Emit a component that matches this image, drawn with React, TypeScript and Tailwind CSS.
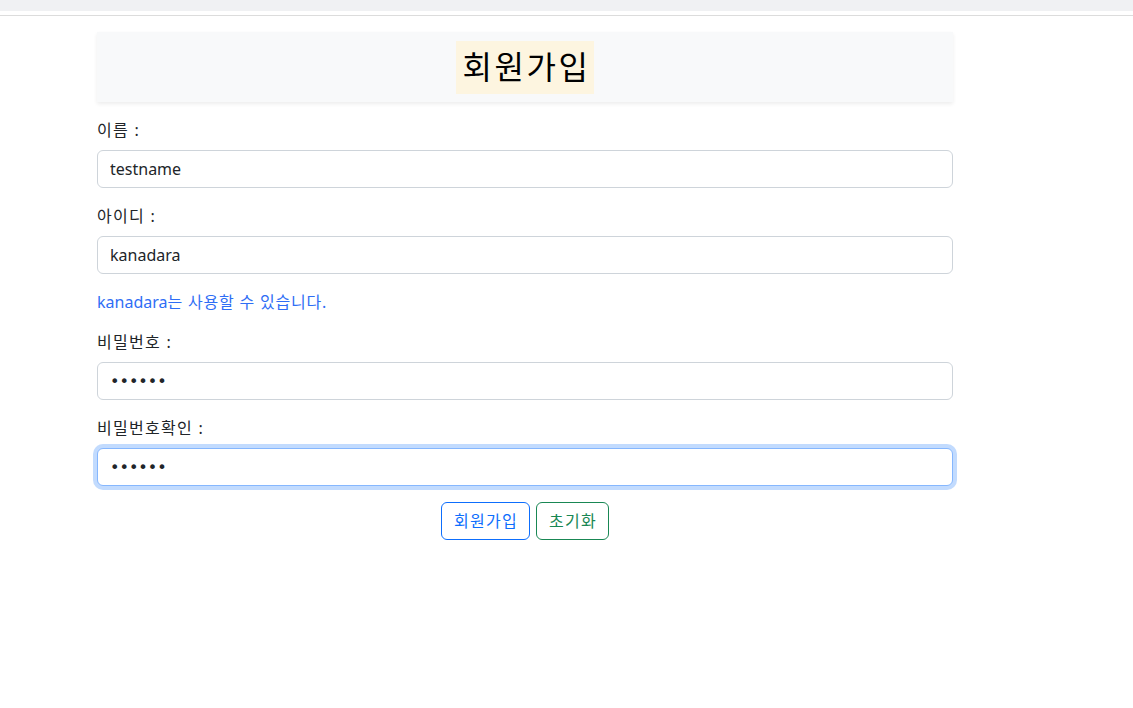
import React from "react";

const font = { fontFamily: '"Noto Sans", "Noto Sans CJK KR", sans-serif' };

function Field({ label, value, type = "text", focused = false }: { label: string; value: string; type?: string; focused?: boolean }) {
  return (
    <div className="mb-4">
      <label className="block mb-2 text-[16px] leading-6 text-[#212529] tracking-[0.08em]">{label}</label>
      <input
        type={type}
        defaultValue={value}
        readOnly
        className={
          "block w-full h-[38px] px-3 text-[16px] leading-6 text-[#212529] bg-white rounded-[6px] outline-none border " +
          (type === "password" ? "font-['DejaVu_Sans',sans-serif] " : "") +
          (focused
            ? "border-[#86b7fe] shadow-[0_0_0_4px_rgba(13,110,253,0.25)]"
            : "border-[#ced4da]")
        }
      />
    </div>
  );
}

export default function App() {
  return (
    <div className="min-h-[708px] bg-white" style={font}>
      <div className="h-[11px] bg-[#f0f1f3]" />
      <div className="h-[4px] bg-white border-b border-[#dcdcdc] box-content" />
      <div className="ml-[97px] w-[856px] pt-4">
        <div className="h-[70px] bg-[#f8f9fa] shadow-[0_2px_4px_rgba(0,0,0,0.075)] flex items-center justify-center">
          <span className="bg-[#fdf5e0] pl-[6px] pr-[3px] h-[53px] flex items-center text-[32px] leading-[1.2] text-[#000] tracking-[0.08em]">회원가입</span>
        </div>
        <div className="mt-4">
          <Field label="이름 :" value="testname" />
          <Field label="아이디 :" value="kanadara" />
          <div className="mb-4 text-[16px] leading-6 text-[#2f6ef5]">
            kanadara<span className="tracking-[0.05em]">는 사용할 수 있습니다.</span>
          </div>
          <Field label="비밀번호 :" value="123456" type="password" />
          <Field label="비밀번호확인 :" value="123456" type="password" focused />
          <div className="flex justify-center gap-[6px]">
            <button className="h-[38px] pl-3 pr-[11px] border border-[#0d6efd] text-[#0d6efd] rounded-[6px] text-[16px] leading-6 bg-white tracking-[0.08em]">회원가입</button>
            <button className="h-[38px] pl-3 pr-[11px] border border-[#198754] text-[#198754] rounded-[6px] text-[16px] leading-6 bg-white tracking-[0.08em]">초기화</button>
          </div>
        </div>
      </div>
    </div>
  );
}
